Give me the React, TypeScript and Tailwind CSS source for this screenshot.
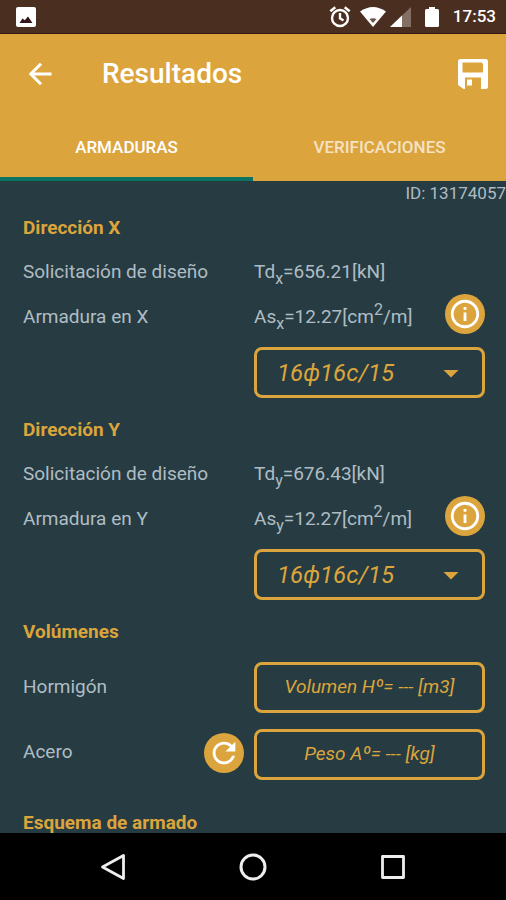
import { useState } from "react";
import { MdArrowDropDown, MdOutlineInfo, MdRefresh } from "react-icons/md";

interface Direction {
  axis: string;
  sub: string;
  load: string;
  area: string;
}

const directions: Direction[] = [
  { axis: "X", sub: "x", load: "656.21", area: "12.27" },
  { axis: "Y", sub: "y", load: "676.43", area: "12.27" },
];

const rebarOptions = ["16ф16c/15", "12ф20c/20", "20ф12c/10"];

function StatusBar() {
  return (
    <div className="flex h-[34px] shrink-0 items-center justify-between border-b border-[#35161a] bg-[#4a2e20] pl-4 pr-2.5 text-white">
      <svg viewBox="0 0 20 20" className="size-5" aria-hidden="true">
        <rect width="20" height="20" rx="2" fill="#fff" />
        <path d="M3.5 16l3-4.5 2.3 1.7 3.2-3.7 4.5 6.5z" fill="#35161a" />
      </svg>
      <div className="flex items-center">
        <svg viewBox="0 0 24 24" className="mr-2 size-6" fill="none" stroke="#fff" strokeWidth="2.4" aria-hidden="true">
          <circle cx="12" cy="13" r="8" />
          <path d="M12 8v5.300l3.500 2.200M2.300 6.300L7.300 2.300M21.700 6.300L16.700 2.300" />
        </svg>
        <svg viewBox="0 0 26 20" className="mr-1 h-5 w-[26px]" aria-hidden="true">
          <path d="M0 4.5Q13-4.5 26 4.5L13 20z" fill="#fff" />
          <path d="M9.500 12Q13 10.500 16.500 12L13 16z" fill="#6b5549" />
        </svg>
        <svg viewBox="0 0 21 20" className="mr-3.5 h-5 w-[21px]" aria-hidden="true">
          <path d="M21 0v20H0z" fill="#846f65" />
          <path d="M12 8.6V20H0z" fill="#fff" />
        </svg>
        <svg viewBox="0 0 14 20" className="mr-3.5 h-5 w-[14px]" aria-hidden="true">
          <rect x="4" width="6" height="4" fill="#fff" />
          <rect y="2" width="14" height="18" rx="1.5" fill="#fff" />
        </svg>
        <span className="text-[17px] font-medium">17:53</span>
      </div>
    </div>
  );
}

function BackIcon() {
  return (
    <svg viewBox="0 0 32 32" className="size-8" fill="none" stroke="#fff" strokeWidth="3" aria-hidden="true">
      <path d="M27.500 16H7M17 5.800L6.800 16L17 26.200" />
    </svg>
  );
}

function SaveIcon() {
  return (
    <svg viewBox="0 0 30 30" className="size-[30px]" aria-hidden="true">
      <path
        fillRule="evenodd"
        fill="#fff"
        d="M2.500 0h25a2.500 2.500 0 0 1 2.500 2.500v25a2.500 2.500 0 0 1-2.500 2.500h-4.500V18.500H7V30H5.500L0 26V2.500A2.500 2.500 0 0 1 2.500 0zM4.500 3.500v10H25V5.500L24 3.500z"
      />
      <rect x="9" y="20.5" width="5" height="6" fill="#fff" />
    </svg>
  );
}

function DirectionSection({ axis, sub, load, area }: Direction) {
  const [rebar, setRebar] = useState(rebarOptions[0]);

  return (
    <section className="mb-[9px]">
      <h2 className="font-bold leading-[45px] text-[#dca43c]">
        Dirección {axis}
      </h2>
      <div className="grid grid-cols-2 grid-rows-[45px] items-center">
        <span>Solicitación de diseño</span>
        <span>
          Td<sub className="-bottom-1.5 text-[16px]">{sub}</sub>={load}[kN]
        </span>
      </div>
      <div className="grid grid-cols-2 grid-rows-[45px] items-center">
        <span>Armadura en {axis}</span>
        <div className="flex items-center justify-between">
          <span>
            As<sub className="-bottom-1.5 text-[16px]">{sub}</sub>={area}[cm
            <sup className="text-[16px]">2</sup>/m]
          </span>
          <button
            aria-label={`Información dirección ${axis}`}
            className="mb-2 flex size-10 items-center justify-center rounded-full bg-[#dca43c] text-white"
          >
            <MdOutlineInfo className="size-[34px]" />
          </button>
        </div>
      </div>
      <div className="relative ml-auto mt-[7px] w-1/2">
        <select
          aria-label={`Armadura en ${axis}`}
          value={rebar}
          onChange={(e) => setRebar(e.target.value)}
          className="block h-[51px] w-full appearance-none rounded-lg border-3 border-[#dca43c] bg-transparent pl-5 text-[24px] italic text-[#dca43c]"
        >
          {rebarOptions.map((option) => (
            <option key={option} value={option}>
              {option}
            </option>
          ))}
        </select>
        <MdArrowDropDown className="pointer-events-none absolute right-4 top-2 size-9 text-[#dca43c]" />
      </div>
    </section>
  );
}

export default function App() {
  const [tab, setTab] = useState<"armaduras" | "verificaciones">("armaduras");

  return (
    <div className="flex h-screen flex-col overflow-hidden bg-[#263c42] font-[Roboto,sans-serif] text-[19px] text-[#b0bcc4]">
      <StatusBar />

      <header className="shrink-0 bg-[#dca43c] text-white">
        <div className="flex h-20 items-center pl-6 pr-[18px]">
          <button aria-label="Volver">
            <BackIcon />
          </button>
          <h1 className="ml-[46px] flex-1 text-[28px] font-medium">
            Resultados
          </h1>
          <button aria-label="Guardar">
            <SaveIcon />
          </button>
        </div>
        <div role="tablist" className="grid h-[67px] grid-cols-2 text-[17px] font-medium">
          <button
            role="tab"
            aria-selected={tab === "armaduras"}
            onClick={() => setTab("armaduras")}
            className={`border-y-4 border-t-transparent ${
              tab === "armaduras"
                ? "border-b-[#0d7463]"
                : "border-b-transparent text-white/70"
            }`}
          >
            ARMADURAS
          </button>
          <button
            role="tab"
            aria-selected={tab === "verificaciones"}
            onClick={() => setTab("verificaciones")}
            className={`border-y-4 border-t-transparent ${
              tab === "verificaciones"
                ? "border-b-[#0d7463]"
                : "border-b-transparent text-white/70"
            }`}
          >
            VERIFICACIONES
          </button>
        </div>
      </header>

      <main className="min-h-0 flex-1 overflow-hidden">
        <p className="text-right text-[17px] leading-6">ID: 13174057</p>
        <div className="pl-[23px] pr-[21px]">
          {directions.map((direction) => (
            <DirectionSection key={direction.axis} {...direction} />
          ))}

          <section>
            <h2 className="font-bold leading-[45px] text-[#dca43c]">
              Volúmenes
            </h2>
            <div className="mt-2 grid grid-cols-2 items-center">
              <span>Hormigón</span>
              <button className="h-[51px] rounded-lg border-3 border-[#dca43c] italic text-[#dca43c]">
                Volumen Hº= --- [m3]
              </button>
            </div>
            <div className="mt-4 grid grid-cols-2 items-center">
              <div className="mb-1 flex items-center justify-between pr-2.5">
                <span>Acero</span>
                <button
                  aria-label="Recalcular"
                  className="flex size-10 items-center justify-center rounded-full bg-[#dca43c] text-white"
                >
                  <MdRefresh className="size-[34px]" />
                </button>
              </div>
              <button className="h-[51px] rounded-lg border-3 border-[#dca43c] italic text-[#dca43c]">
                Peso Aº= --- [kg]
              </button>
            </div>
          </section>

          <h2 className="mt-5 font-bold leading-[45px] text-[#dca43c]">
            Esquema de armado
          </h2>
        </div>
      </main>

      <nav className="flex h-[67px] shrink-0 items-center justify-center gap-28 bg-black text-[#eeeeee]">
        <button aria-label="Atrás">
          <svg viewBox="0 0 28 28" className="size-7" fill="none" stroke="currentColor" strokeWidth="2.8" strokeLinejoin="round" aria-hidden="true">
            <path d="M24.500 2.500v23L3.500 14z" />
          </svg>
        </button>
        <button aria-label="Inicio">
          <svg viewBox="0 0 28 28" className="size-7" fill="none" stroke="currentColor" strokeWidth="3" aria-hidden="true">
            <circle cx="14" cy="14" r="12" />
          </svg>
        </button>
        <button aria-label="Recientes">
          <svg viewBox="0 0 28 28" className="size-7" fill="none" stroke="currentColor" strokeWidth="2.8" strokeLinejoin="round" aria-hidden="true">
            <rect x="3.5" y="3.5" width="21" height="21" />
          </svg>
        </button>
      </nav>
    </div>
  );
}
